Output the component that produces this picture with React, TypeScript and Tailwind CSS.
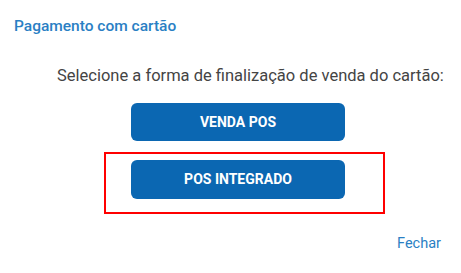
export default function App() {
  return (
    <div
      className="w-[461px] h-[273px] bg-white flex flex-col overflow-hidden"
      style={{ fontFamily: "Roboto, 'Liberation Sans', sans-serif" }}
    >
      <h2 className="pl-[14px] pt-[16px] text-[15.5px] leading-[20px] font-medium text-[#2a7fc4]">
        Pagamento com cartão
      </h2>

      <p className="mt-[30px] pl-[57px] text-[16.5px] leading-[20px] text-[#444]">
        Selecione a forma de finalização de venda do cartão:
      </p>

      <div className="mt-[17px] pl-[131px]">
        <button className="w-[214px] h-[38px] rounded-[6px] bg-[#0b67b2] text-white text-[14px] font-bold">
          VENDA POS
        </button>
      </div>

      <div className="mt-[11px] ml-[104px] w-[281px] h-[62px] border-2 border-[#ff0000] pl-[25px] pt-[6px]">
        <button className="w-[214px] h-[39px] rounded-[6px] bg-[#0b67b2] text-white text-[14px] font-bold">
          POS INTEGRADO
        </button>
      </div>

      <div className="mt-[22px] flex justify-end pr-[20px]">
        <button className="text-[14.5px] leading-[16px] text-[#2a7fc4]">Fechar</button>
      </div>
    </div>
  );
}
